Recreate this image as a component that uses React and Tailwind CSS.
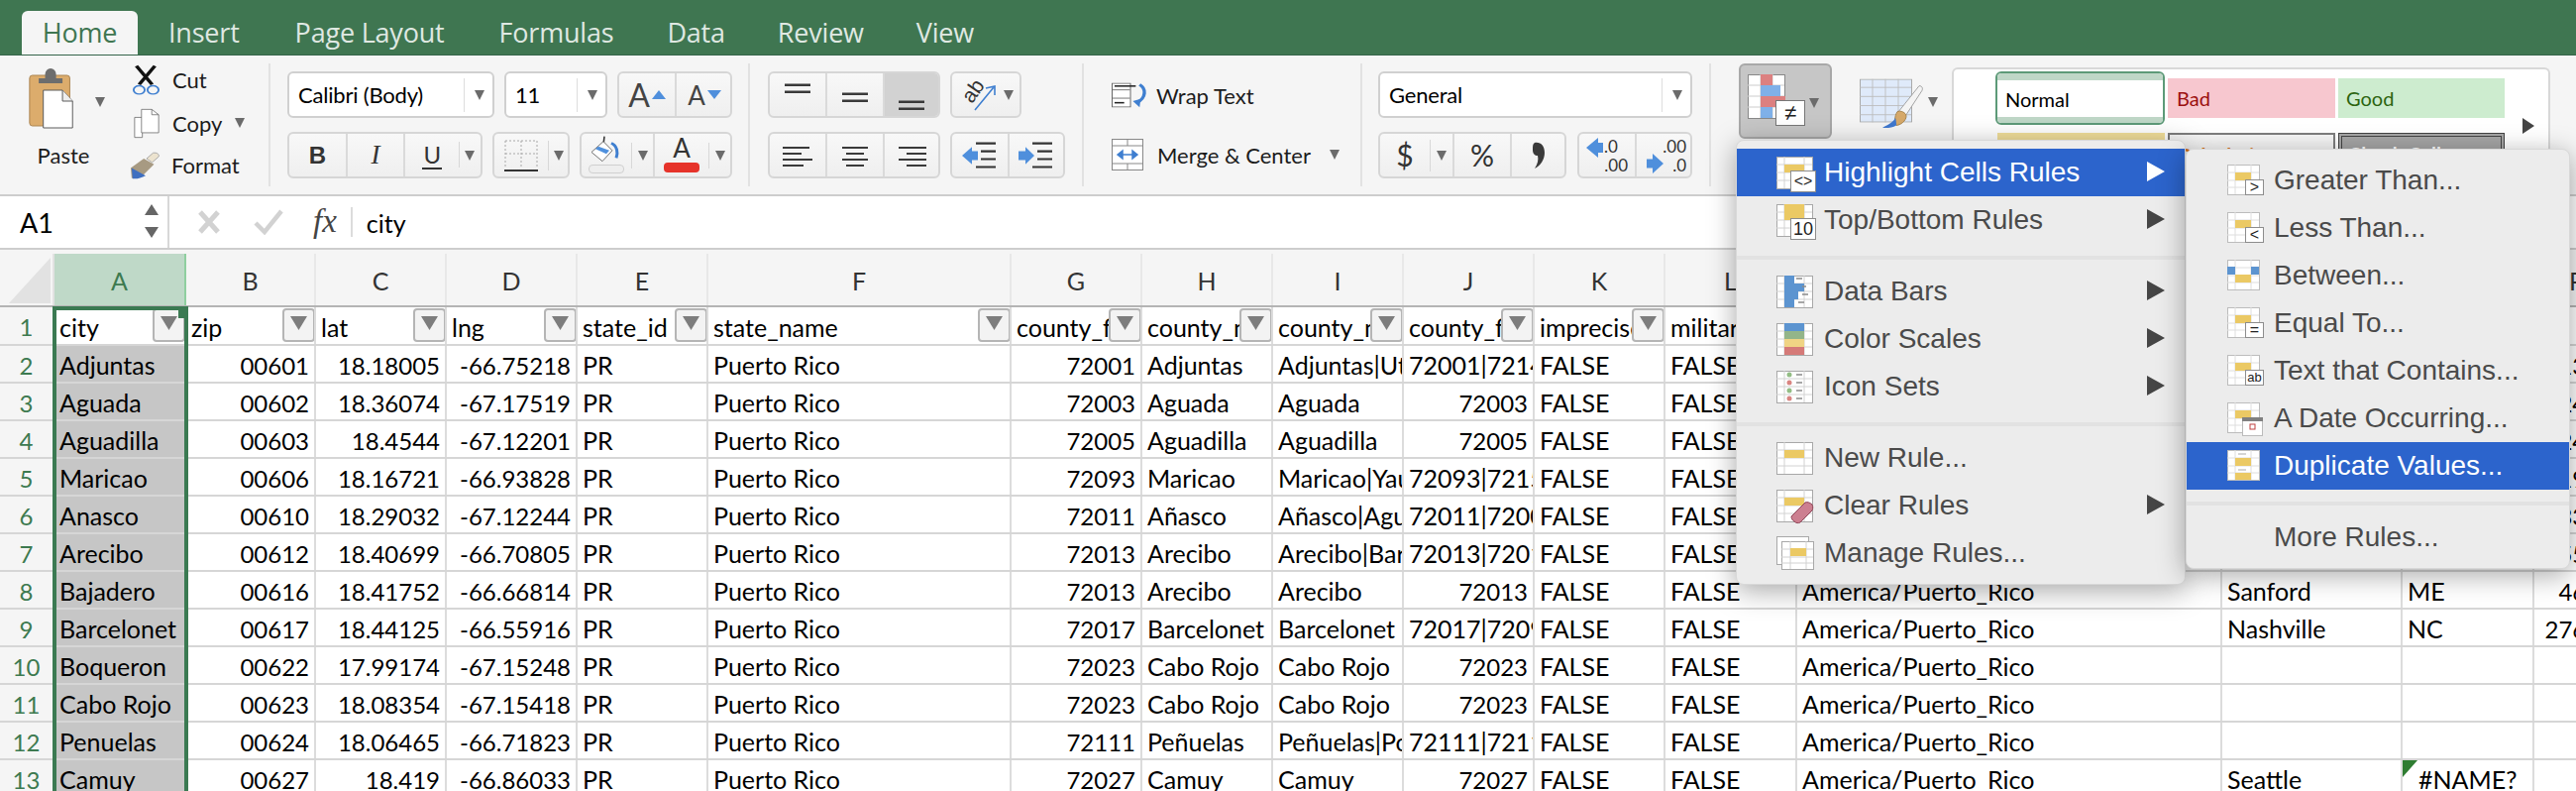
const colW = ["w-[133px]", "w-[131px]", "w-[132px]", "w-[132px]", "w-[132px]", "w-[306px]", "w-[132px]", "w-[132px]", "w-[132px]", "w-[132px]", "w-[132px]", "w-[133px]", "w-[429px]", "w-[182px]", "w-[133px]", "w-[101px]"];
const letters = "ABCDEFGHIJKLMNOP".split("");
const heads = ["city", "zip", "lat", "lng", "state_id", "state_name", "county_fips", "county_name", "county_names_all", "county_fips_all", "imprecise", "military", "timezone", "", "", ""];

const rows = [
  ["Adjuntas", "00601", "18.18005", "-66.75218", "72001", "Adjuntas", "Adjuntas|Utuado", "72001|72141", "", "", "", "13000"],
  ["Aguada", "00602", "18.36074", "-67.17519", "72003", "Aguada", "Aguada", "72003", "", "", "", "24000"],
  ["Aguadilla", "00603", "18.4544", "-67.12201", "72005", "Aguadilla", "Aguadilla", "72005", "", "", "", "24000"],
  ["Maricao", "00606", "18.16721", "-66.93828", "72093", "Maricao", "Maricao|Yauco", "72093|72153", "", "", "", "19000"],
  ["Anasco", "00610", "18.29032", "-67.12244", "72011", "Añasco", "Añasco|Aguada", "72011|72003", "", "", "", "33000"],
  ["Arecibo", "00612", "18.40699", "-66.70805", "72013", "Arecibo", "Arecibo|Barceloneta", "72013|72017", "", "", "", "55000"],
  ["Bajadero", "00616", "18.41752", "-66.66814", "72013", "Arecibo", "Arecibo", "72013", "Sanford", "ME", "", "46000"],
  ["Barcelonet", "00617", "18.44125", "-66.55916", "72017", "Barcelonet", "Barcelonet", "72017|72091", "Nashville", "NC", "", "276000"],
  ["Boqueron", "00622", "17.99174", "-67.15248", "72023", "Cabo Rojo", "Cabo Rojo", "72023", "", "", "", ""],
  ["Cabo Rojo", "00623", "18.08354", "-67.15418", "72023", "Cabo Rojo", "Cabo Rojo", "72023", "", "", "", ""],
  ["Penuelas", "00624", "18.06465", "-66.71823", "72111", "Peñuelas", "Peñuelas|Ponce", "72111|72113", "", "", "", ""],
  ["Camuy", "00627", "18.419", "-66.86033", "72027", "Camuy", "Camuy", "72027", "Seattle", "#NAME?", "", ""],
];

function Caret({ className = "" }) {
  return (
    <svg width="10" height="12" viewBox="0 0 10 12" className={className}>
      <path d="M0 1h10L5 11z" fill="#6b6b6b" />
    </svg>
  );
}

function Seg({ className = "", children }) {
  return <div className={"flex items-center justify-center h-full shrink-0 border-r-2 border-[#dadada] last:border-r-0 " + className}>{children}</div>;
}

function BtnGroup({ className = "", children }) {
  return <div className={"flex h-[47px] rounded-md border-2 border-[#d6d6d6] bg-gradient-to-b from-[#f8f8f8] to-[#efefef] overflow-hidden " + className}>{children}</div>;
}

function Lines({ ys, xs = [[3, 29]], w = 32, h = 32, bar = 2.5, color = "#3a3a3a" }) {
  return (
    <svg width={w} height={h} viewBox={`0 0 ${w} ${h}`}>
      {ys.map((y, i) => {
        const x = xs[i % xs.length];
        return <rect key={i} x={x[0]} y={y} width={x[1] - x[0]} height={bar} fill={color} />;
      })}
    </svg>
  );
}

function Combo({ className, label }) {
  return (
    <div className={"flex items-center h-[47px] rounded-md border-2 border-[#d0d0d0] bg-white pl-[9px] pr-[8px] shrink-0 " + className}>
      <span className="flex-1 text-[22px] text-black tracking-[-0.2px]">{label}</span>
      <span className="w-px h-[34px] bg-[#dedede] mr-[10px]" />
      <Caret />
    </div>
  );
}

function Clipboard() {
  return (
    <svg width="48" height="62" viewBox="0 0 52 62" preserveAspectRatio="none">
      <rect x="2" y="8" width="44" height="51" rx="3" fill="#dcac6c" stroke="#a98350" />
      <path d="M12 16v-5h7v-4a6 6 0 0 1 12 0v4h7v5z" fill="#6d6d6d" />
      <path d="M17 23h21l11 11v27H17z" fill="#fff" stroke="#555" strokeWidth="1" />
      <path d="M38 23v11h11" fill="#eee" stroke="#555" strokeWidth="1" />
    </svg>
  );
}

function Scissors() {
  return (
    <svg width="28" height="32" viewBox="0 0 30 46" preserveAspectRatio="none">
      <path d="M5 2l17 27M25 2L8 29" stroke="#111" strokeWidth="4" />
      <circle cx="8" cy="37" r="6" fill="none" stroke="#3f7fd0" strokeWidth="2" />
      <circle cx="23" cy="37" r="6" fill="none" stroke="#3f7fd0" strokeWidth="2" />
    </svg>
  );
}

function CopyIcon() {
  return (
    <svg width="26" height="31" viewBox="0 0 30 46" preserveAspectRatio="none">
      <path d="M1 14h9v30H1z" fill="#fff" stroke="#666" />
      <path d="M9 2h12l8 8v27H9z" fill="#fff" stroke="#666" />
      <path d="M21 2v8h8" fill="none" stroke="#666" />
    </svg>
  );
}

function Brush() {
  return (
    <svg width="32" height="28" viewBox="0 0 34 44" preserveAspectRatio="none">
      <path d="M25 2c4-1 7 2 6 6l-7 9-6-6z" fill="#ece3cf" stroke="#999" />
      <path d="M15 11l11 9-11 16c-4 3-10 6-13 6L1 26z" fill="#a79a82" />
      <path d="M2 26l15 12-3 2c-4 3-8 3-11 3z" fill="#3f6fc0" />
    </svg>
  );
}

function BucketIcon() {
  return (
    <svg width="34" height="30" viewBox="0 0 34 36" preserveAspectRatio="none">
      <path d="M15 2l-1 10" stroke="#333" strokeWidth="1.5" />
      <path d="M14 8L2 21l11 11 10-13z" fill="#fff" stroke="#666" />
      <path d="M9 14l11 5-3 4L6 17z" fill="#4f90dd" />
      <path d="M22 10c6 3 7 12 5 18" stroke="#3f7fd0" strokeWidth="3" fill="none" />
    </svg>
  );
}

function GridBase({ children }) {
  return (
    <svg width="40" height="40" viewBox="0 0 40 40">
      <rect x="0.5" y="4.5" width="36" height="32" fill="#fff" stroke="#a8a8a8" />
      <path d="M8 4v32M28 4v32M0 12h36M0 20h36M0 28h36" stroke="#d2d2d2" />
      {children}
    </svg>
  );
}

function Badge({ x = 14, y = 18, w = 25, h = 21, label, size = 18 }) {
  return (
    <g>
      <rect x={x + 0.5} y={y + 0.5} width={w} height={h} fill="#fff" stroke="#8d8d8d" />
      <text x={x + w / 2 + 0.5} y={y + h / 2 + size * 0.36} textAnchor="middle" fontSize={size} fontFamily="Liberation Sans" fill="#222">{label}</text>
    </g>
  );
}

const yellow = "#ebc964";

function Highlight({ label, top }) {
  return (
    <GridBase>
      <rect x="8" y={top ? 4 : 12} width="20" height={top ? 16 : 8} fill={yellow} />
      <Badge label={label} size={top ? 18 : 16} />
    </GridBase>
  );
}

function SubBase({ children }) {
  return (
    <svg width="40" height="40" viewBox="0 0 40 40">
      <rect x="0.5" y="4.5" width="32" height="30" fill="#fff" stroke="#bcbcbc" />
      <path d="M8 4v30M24 4v30M0 12h32M0 20h32M0 27h32" stroke="#dedede" />
      {children}
    </svg>
  );
}

function subBadge(label, size = 16) {
  return <Badge x={18} y={19} w={18} h={15} label={label} size={size} />;
}

const subYellow = <rect x="8" y="12" width="16" height="8" fill={yellow} />;

const mainItems = [
  { label: "Highlight Cells Rules", icon: <Highlight label="<>" />, arrow: true, active: true },
  { label: "Top/Bottom Rules", icon: <Highlight label="10" top />, arrow: true },
  "sep",
  {
    label: "Data Bars",
    arrow: true,
    icon: (
      <GridBase>
        <path d="M8 4h10v8H8zM8 12h20v8H8zM8 20h14v8H8zM8 28h10v8H8z" fill="#5c94d0" />
        <path d="M20 7h6M26 15h4M26 23h6M22 31h6" stroke="#8a8a8a" strokeWidth="1.5" />
      </GridBase>
    ),
  },
  {
    label: "Color Scales",
    arrow: true,
    icon: (
      <GridBase>
        <rect x="8" y="4" width="20" height="8" fill="#5c94d0" />
        <rect x="8" y="12" width="20" height="8" fill="#93b589" />
        <rect x="8" y="20" width="20" height="8" fill="#f0d484" />
        <rect x="8" y="28" width="20" height="8" fill="#d57a78" />
      </GridBase>
    ),
  },
  {
    label: "Icon Sets",
    arrow: true,
    icon: (
      <GridBase>
        <circle cx="13" cy="8" r="2.5" fill="#93bd85" />
        <circle cx="13" cy="16" r="2.5" fill="#d98582" />
        <circle cx="13" cy="24" r="2.5" fill="#93bd85" />
        <circle cx="13" cy="32" r="2.5" fill="#d98582" />
        <path d="M20 8h6M20 16h6M20 24h6M20 32h6" stroke="#8a8a8a" strokeWidth="1.5" />
      </GridBase>
    ),
  },
  "sep",
  { label: "New Rule...", icon: <GridBase><rect x="8" y="12" width="20" height="8" fill={yellow} /></GridBase> },
  {
    label: "Clear Rules",
    arrow: true,
    icon: (
      <GridBase>
        <rect x="8" y="12" width="20" height="8" fill={yellow} />
        <path d="M15 31l14-14c2-1 5 0 7 2 1 2 1 4 0 6L24 37c-2 1-4 1-6-1-2-1-3-3-3-5z" fill="#cc7f90" stroke="#8f4658" />
      </GridBase>
    ),
  },
  {
    label: "Manage Rules...",
    icon: (
      <svg width="40" height="40" viewBox="0 0 40 40">
        <rect x="0.5" y="3.5" width="32" height="28" fill="#fff" stroke="#a8a8a8" />
        <rect x="5.5" y="8.5" width="32" height="28" fill="#fff" stroke="#a8a8a8" />
        <path d="M14 8v28M30 8v28M5 16h32M5 24h32M5 30h32" stroke="#d2d2d2" />
        <rect x="14" y="15" width="16" height="8" fill={yellow} />
      </svg>
    ),
  },
];

const subItems = [
  { label: "Greater Than...", icon: <SubBase>{subYellow}{subBadge(">")}</SubBase> },
  { label: "Less Than...", icon: <SubBase>{subYellow}{subBadge("<")}</SubBase> },
  {
    label: "Between...",
    icon: (
      <SubBase>
        <rect x="0" y="11" width="8" height="8" fill="#5c94d0" />
        <rect x="24" y="11" width="8" height="8" fill="#5c94d0" />
        <rect x="8" y="19" width="16" height="8" fill={yellow} />
      </SubBase>
    ),
  },
  { label: "Equal To...", icon: <SubBase>{subYellow}{subBadge("=")}</SubBase> },
  { label: "Text that Contains...", icon: <SubBase>{subYellow}{subBadge("ab", 13)}</SubBase> },
  {
    label: "A Date Occurring...",
    icon: (
      <SubBase>
        {subYellow}
        <rect x="15.5" y="19.5" width="20" height="18" fill="#fff" stroke="#bbb" />
        <rect x="15" y="19" width="21" height="4" fill="#808080" />
        <rect x="23" y="26" width="5" height="5" fill="#fff" stroke="#c04040" />
      </SubBase>
    ),
  },
  {
    label: "Duplicate Values...",
    active: true,
    icon: (
      <SubBase>
        <rect x="8" y="12" width="16" height="8" fill={yellow} />
        <rect x="8" y="27" width="16" height="7" fill={yellow} />
        <path d="M11 8h8M11 24h8" stroke="#aaa" />
      </SubBase>
    ),
  },
  "sep",
  { label: "More Rules..." },
];

function MenuRow({ item, leftClass, iconClass }) {
  const on = item.active;
  return (
    <div className={"flex items-center h-[48px] relative " + leftClass + (on ? " bg-[#2c64cc] text-white" : " text-[#4a4a4a]")}>
      <span className={"flex items-center shrink-0 " + iconClass}>{item.icon}</span>
      <span>{item.label}</span>
      {item.arrow && (
        <svg width="18" height="20" viewBox="0 0 18 20" className="absolute right-[20px] top-[13px]">
          <path d="M0 0l18 10L0 20z" fill={on ? "#fff" : "#454545"} />
        </svg>
      )}
    </div>
  );
}

function Menu({ className, items, leftClass, iconClass }) {
  return (
    <div className={"absolute z-20 bg-[#ececec] rounded-lg font-['Liberation_Sans'] text-[28px] shadow-[0_6px_28px_rgba(0,0,0,0.35)] border border-[#d8d8d8] " + className}>
      {items.map((it, i) =>
        it === "sep" ? (
          <div key={i} className="h-[4px] bg-[#e2e2e2] mt-[12px] mb-[8px]" />
        ) : (
          <MenuRow key={i} item={it} leftClass={leftClass} iconClass={iconClass} />
        )
      )}
    </div>
  );
}

function FilterBtn() {
  return (
    <div className="absolute right-[-1px] top-[1px] w-[33px] h-[34px] z-10 rounded-sm border-2 border-[#b5b5b5] bg-[#f3f3f3] flex justify-center pt-[5px]">
      <svg width="17" height="16" viewBox="0 0 17 16"><path d="M0 1h17l-8.500 14z" fill="#7d7d7d" /></svg>
    </div>
  );
}

function Cell({ i, text, right, filter, bg }) {
  return (
    <div className={"relative h-full shrink-0 flex items-center px-[5px] pt-[3px] overflow-hidden whitespace-nowrap border-r-2 border-[#dcdcdc] " + colW[i] + (right ? " justify-end" : " text-[25px]") + (bg ? " bg-[#c6c6c6]" : "")}>
      <span className={right ? "" : "block"}>{text}</span>
      {filter && <FilterBtn />}
    </div>
  );
}

function DataRow({ num, r }) {
  const [city, zip, lat, lng, fips, county, all, fipsAll, n, o, , p] = r;
  const vals = [city, zip, lat, lng, "PR", "Puerto Rico", fips, county, all, fipsAll, "FALSE", "FALSE", "America/Puerto_Rico", n, o, p];
  const rightCols = [1, 2, 3, 6, 15];
  return (
    <div className="flex h-[38px] border-b-2 border-[#d6d6d6]">
      <div className="w-[55px] shrink-0 bg-[#f5f5f5] text-[#3d7a50] flex items-center justify-center pt-[3px] border-r-2 border-[#dcdcdc]">{num}</div>
      {vals.map((v, i) => {
        if (i === 14 && v === "#NAME?") {
          return (
            <div key={i} className={"relative h-full shrink-0 flex items-center pl-[16px] pt-[3px] overflow-hidden border-r-2 border-[#dcdcdc] text-[25px] " + colW[i]}>
              <span>{v}</span>
              <svg width="15" height="17" viewBox="0 0 15 17" className="absolute left-0 top-0"><path d="M0 0h15L0 17z" fill="#2f7d32" /></svg>
            </div>
          );
        }
        return <Cell key={i} i={i} text={v} right={rightCols.includes(i) || (i === 9 && !v.includes("|"))} bg={i === 0} />;
      })}
    </div>
  );
}

export default function App() {
  return (
    <div className="relative w-[2600px] h-[798px] overflow-hidden bg-white font-['Lato',sans-serif] text-black">
      {/* title tabs */}
      <div className="h-[56px] bg-[#3f7651] border-b border-[#35654a] flex items-end pl-[22px] font-['Open_Sans',sans-serif] text-[27px] tracking-[-0.2px] text-[#dfe8e2]">
        <div className="w-[117px] h-[44px] bg-[#f5f5f5] rounded-t-md text-[#3f7651] flex items-center justify-center">Home</div>
        <div className="ml-[31px] h-[44px] flex items-center">Insert</div>
        <div className="ml-[56px] h-[44px] flex items-center">Page Layout</div>
        <div className="ml-[55px] h-[44px] flex items-center">Formulas</div>
        <div className="ml-[54px] h-[44px] flex items-center">Data</div>
        <div className="ml-[53px] h-[44px] flex items-center">Review</div>
        <div className="ml-[53px] h-[44px] flex items-center">View</div>
      </div>

      {/* ribbon */}
      <div className="h-[140px] bg-[#f5f5f5] flex pt-[8px] text-[22px] text-[#1c1c1c]">
        {/* clipboard */}
        <div className="w-[273px] h-[124px] shrink-0 border-r-2 border-[#e2e2e2] flex">
          <div className="w-[133px] pl-[28px] pt-[4px] relative">
            <Clipboard />
            <Caret className="absolute left-[96px] top-[33px]" />
            <div className="w-[72px] text-center mt-[10px]">Paste</div>
          </div>
          <div className="flex flex-col">
            <div className="flex items-center h-[34px] gap-[13px]"><Scissors /><span>Cut</span></div>
            <div className="flex items-center h-[46px] gap-[13px] mt-[6px] ml-[2px]"><CopyIcon /><span>Copy</span><Caret /></div>
            <div className="flex items-center h-[46px] gap-[10px] -ml-[2px]"><Brush /><span>Format</span></div>
          </div>
        </div>

        {/* font */}
        <div className="w-[484px] h-[124px] shrink-0 border-r-2 border-[#e2e2e2] pl-[17px] pt-[8px] flex flex-col gap-[14px]">
          <div className="flex gap-[10px]">
            <Combo className="w-[209px]" label="Calibri (Body)" />
            <Combo className="w-[104px]" label="11" />
            <BtnGroup className="w-[116px]">
              <Seg className="w-[58px] gap-[2px]">
                <span className="text-[32px] leading-none text-[#444]">A</span>
                <svg width="14" height="9" viewBox="0 0 14 9"><path d="M7 0l7 9H0z" fill="#4f8fdc" /></svg>
              </Seg>
              <Seg className="w-[56px] gap-[2px]">
                <span className="text-[26px] leading-none text-[#444]">A</span>
                <svg width="14" height="9" viewBox="0 0 14 9"><path d="M0 0h14L7 9z" fill="#4f8fdc" /></svg>
              </Seg>
            </BtnGroup>
          </div>
          <div className="flex gap-[10px]">
            <BtnGroup className="w-[197px]">
              <Seg className="w-[59px] font-['Liberation_Sans'] font-bold text-[24px] text-[#333]">B</Seg>
              <Seg className="w-[58px] font-['Liberation_Serif'] italic text-[27px] text-[#333]">I</Seg>
              <div className="w-[56px] flex items-center justify-center relative">
                <span className="text-[24px] text-[#333] border-b-2 border-[#333] leading-[26px] px-[1px]">U</span>
                <span className="absolute right-0 top-[8px] w-px h-[26px] bg-[#d8d8d8]" />
              </div>
              <div className="w-[22px] flex items-center justify-center"><Caret /></div>
            </BtnGroup>
            <BtnGroup className="w-[78px]">
              <div className="w-[54px] flex items-center justify-center">
                <svg width="34" height="34" viewBox="0 0 34 34">
                  <path d="M1 2h32M1 15h32M17 2v28M1 2v28M33 2v28" stroke="#a8a8a8" strokeDasharray="2 2" fill="none" />
                  <rect x="0" y="31" width="34" height="2" fill="#333" />
                </svg>
              </div>
              <span className="w-px h-[30px] my-auto bg-[#d8d8d8]" />
              <div className="flex-1 flex items-center justify-center"><Caret /></div>
            </BtnGroup>
            <BtnGroup className="w-[154px]">
              <div className="w-[50px] flex flex-col items-center pt-[1px]">
                <BucketIcon />
                <span className="w-[36px] h-[9px] rounded-sm bg-[#eeeeee] border border-[#d0d0d0]" />
              </div>
              <span className="w-px h-[26px] my-auto bg-[#d8d8d8]" />
              <div className="w-[23px] flex items-center justify-center border-r-2 border-[#dadada]"><Caret /></div>
              <div className="w-[54px] flex flex-col items-center">
                <span className="text-[26px] leading-[28px] text-[#333]">A</span>
                <span className="w-[36px] h-[10px] rounded-sm bg-[#e6332a] mt-[1px]" />
              </div>
              <span className="w-px h-[26px] my-auto bg-[#d8d8d8]" />
              <div className="flex-1 flex items-center justify-center"><Caret /></div>
            </BtnGroup>
          </div>
        </div>

        {/* alignment */}
        <div className="w-[337px] h-[124px] shrink-0 border-r-2 border-[#e2e2e2] pl-[18px] pt-[8px] flex flex-col gap-[14px]">
          <div className="flex gap-[10px]">
            <BtnGroup className="w-[174px]">
              <Seg className="w-[58px]"><Lines ys={[4.5, 11.5]} /></Seg>
              <Seg className="w-[58px]"><Lines ys={[13.5, 20.5]} /></Seg>
              <Seg className="flex-1 bg-[#d2d2d2]"><Lines ys={[21.5, 28.5]} /></Seg>
            </BtnGroup>
            <BtnGroup className="w-[72px]">
              <div className="w-[52px] relative shrink-0">
                <span className="absolute left-[9px] top-[7px] -rotate-[55deg] text-[21px] text-[#333] leading-none font-['Liberation_Sans']">ab</span>
                <svg width="50" height="43" viewBox="0 0 50 43" className="absolute left-0 top-0"><path d="M23 37L42 14M34 15l9-2 0 9" stroke="#3f7fd0" strokeWidth="1.6" fill="none" /></svg>
              </div>
              <div className="flex-1 flex items-center"><Caret /></div>
            </BtnGroup>
          </div>
          <div className="flex gap-[10px]">
            <BtnGroup className="w-[174px] h-[46px]">
              <Seg className="w-[58px]"><Lines ys={[7, 13, 19, 25]} bar={2} xs={[[1, 28], [1, 20], [1, 31], [1, 22]]} /></Seg>
              <Seg className="w-[58px]"><Lines ys={[7, 13, 19, 25]} bar={2} xs={[[3, 29], [7, 25]]} /></Seg>
              <Seg className="flex-1"><Lines ys={[7, 13, 19, 25]} bar={2} xs={[[3, 31], [11, 31]]} /></Seg>
            </BtnGroup>
            <BtnGroup className="w-[116px] h-[46px]">
              <Seg className="w-[58px]">
                <svg width="36" height="30" viewBox="0 0 36 34" preserveAspectRatio="none">
                  <path d="M0 17l10-10v5h6v10h-6v5z" fill="#4f8fdc" />
                  <path d="M14 3h20M19 12h15M19 21h15M14 30h20" stroke="#333" strokeWidth="2.4" />
                </svg>
              </Seg>
              <Seg className="flex-1">
                <svg width="36" height="30" viewBox="0 0 36 34" preserveAspectRatio="none">
                  <path d="M0 12h7V7l9 10-9 10v-5H0z" fill="#4f8fdc" />
                  <path d="M14 3h20M19 12h15M19 21h15M14 30h20" stroke="#333" strokeWidth="2.4" />
                </svg>
              </Seg>
            </BtnGroup>
          </div>
        </div>

        {/* wrap / merge */}
        <div className="w-[281px] h-[124px] shrink-0 border-r-2 border-[#e2e2e2] pl-[28px] pt-[10px] flex flex-col gap-[16px]">
          <div className="flex items-center h-[44px] gap-[7px]">
            <svg width="38" height="26" viewBox="0 0 39 34" preserveAspectRatio="none">
              <rect x="0.5" y="1.500" width="19" height="31" fill="#fff" stroke="#666" />
              <path d="M0 10h19M0 21h19" stroke="#666" />
              <path d="M3 27h10" stroke="#222" strokeWidth="2" />
              <path d="M3 5h22" stroke="#222" strokeWidth="2" />
              <path d="M29 3c7 5 7 18-3 24" stroke="#3f7fd0" strokeWidth="3.500" fill="none" />
              <path d="M22 25l8-3-1 11z" fill="#3f7fd0" />
            </svg>
            <span>Wrap Text</span>
          </div>
          <div className="flex items-center h-[44px] gap-[13px]">
            <svg width="33" height="34" viewBox="0 0 33 34">
              <rect x="0.5" y="1.500" width="31" height="31" fill="#fff" stroke="#888" />
              <path d="M0 8h32M0 26h32M16 1v7M16 26v7" stroke="#888" />
              <path d="M6 17h20M6 17l5-4v8zM26 17l-5-4v8z" stroke="#3f7fd0" strokeWidth="1.500" fill="#3f7fd0" />
            </svg>
            <span>Merge &amp; Center</span>
            <Caret className="ml-[6px]" />
          </div>
        </div>

        {/* number */}
        <div className="w-[352px] h-[124px] shrink-0 border-r-2 border-[#e2e2e2] pl-[16px] pt-[8px] flex flex-col gap-[14px]">
          <Combo className="w-[317px]" label="General" />
          <div className="flex gap-[11px]">
            <BtnGroup className="w-[190px] h-[46px]">
              <div className="w-[50px] flex items-center justify-center text-[30px] text-[#333]">$</div>
              <span className="w-px h-[32px] my-auto bg-[#d8d8d8]" />
              <div className="w-[24px] flex items-center justify-center border-r-2 border-[#dadada]"><Caret /></div>
              <Seg className="w-[58px] text-[30px] text-[#333]">%</Seg>
              <Seg className="flex-1">
                <svg width="14" height="28" viewBox="0 0 14 28"><path d="M3 1c6-1 10 3 10 10 0 7-4 13-10 16 3-5 4-9 3-13-3 0-5-2-5-6 0-4 0-6 2-7z" fill="#3a3a3a" /></svg>
              </Seg>
            </BtnGroup>
            <BtnGroup className="w-[116px] h-[46px] text-[17px] leading-[17px] text-[#333]">
              <Seg className="w-[58px]">
                <div className="relative w-[46px] h-[36px]">
                  <svg width="17" height="20" viewBox="0 0 17 24" preserveAspectRatio="none" className="absolute left-[2px] top-0"><path d="M0 12L12 0v6h5v12h-5v6z" fill="#4f8fdc" /></svg>
                  <span className="absolute left-[20px] top-0">.0</span>
                  <span className="absolute right-[2px] bottom-0">.00</span>
                </div>
              </Seg>
              <Seg className="flex-1">
                <div className="relative w-[46px] h-[36px]">
                  <span className="absolute right-0 top-0">.00</span>
                  <svg width="17" height="20" viewBox="0 0 17 22" preserveAspectRatio="none" className="absolute left-[6px] bottom-0"><path d="M0 6h6V0l11 11L6 22v-6H0z" fill="#4f8fdc" /></svg>
                  <span className="absolute right-0 bottom-0">.0</span>
                </div>
              </Seg>
            </BtnGroup>
          </div>
        </div>

        {/* styles */}
        <div className="flex-1 h-[124px] flex pl-[28px]">
          <div className="w-[94px] h-[76px] rounded-md border-2 border-[#a8a8a8] bg-[#c6c6c6] flex items-center pl-[7px] shrink-0 relative">
            <svg width="60" height="56" viewBox="0 0 60 56">
              <rect x="0.5" y="1.500" width="37" height="44" fill="#fff" stroke="#888" />
              <path d="M13 1v44M25 1v44M0 12h37M0 23h37M0 34h37" stroke="#ccc" />
              <rect x="13" y="1" width="12" height="11" fill="#dc8080" />
              <rect x="13" y="12" width="20" height="11" fill="#7fb0e8" />
              <rect x="13" y="23" width="25" height="11" fill="#dc8080" />
              <rect x="13" y="34" width="12" height="11" fill="#7fb0e8" />
              <rect x="28.500" y="27.500" width="29" height="25" fill="#fff" stroke="#777" />
              <text x="43" y="47" textAnchor="middle" fontSize="22" fontFamily="Liberation Sans" fill="#222">≠</text>
            </svg>
            <Caret className="absolute right-[11px] top-[32px]" />
          </div>
          <div className="w-[121px] h-[76px] pl-[28px] shrink-0 relative">
            <svg width="64" height="52" viewBox="0 0 64 68" preserveAspectRatio="none" className="mt-[15px]">
              <rect x="0.5" y="1.500" width="52" height="56" fill="#dfeafa" stroke="#aaa" />
              <path d="M0 12h52M0 24h52M0 36h52M0 48h52M13 1v57M26 1v57M39 1v57" stroke="#bcbcbc" />
              <path d="M60 10c3 0 4 3 3 6L46 50l-8-4z" fill="#f4f4f4" stroke="#999" />
              <path d="M38 44c3-2 9 1 9 6 0 6-6 12-10 12-2-4-2-12 1-18z" fill="#d6a96a" stroke="#a07d46" />
              <path d="M36 52c1 5 1 8 1 10-4 3-10 4-14 3 5-3 11-7 13-13z" fill="#3f78cf" />
            </svg>
            <Caret className="absolute left-[97px] top-[33px]" />
          </div>
          <div className="w-[604px] h-[128px] mt-[4px] rounded-t-md border-2 border-[#d8d8d8] border-b-0 bg-white relative pl-[42px] text-[20px] overflow-hidden shrink-0">
            <div className="flex gap-[3px] pt-[2px] items-center">
              <div className="w-[171px] h-[54px] rounded-md border-2 border-[#5d9a78] bg-white flex flex-col justify-between overflow-hidden">
                <span className="h-[7px] bg-[#bfd7c7]" />
                <span className="pl-[8px] text-black">Normal</span>
                <span className="h-[6px] bg-[#bfd7c7]" />
              </div>
              <div className="w-[169px] h-[40px] bg-[#f7c7cf] text-[#9c1010] pl-[9px] flex items-center">Bad</div>
              <div className="w-[168px] h-[40px] bg-[#cdeccf] text-[#2c6410] pl-[8px] flex items-center">Good</div>
            </div>
            <div className="flex gap-[3px] mt-[8px] pl-[2px]">
              <div className="w-[169px] h-[40px] bg-[#f2df9b]" />
              <div className="w-[169px] h-[40px] border-2 border-[#7d7d7d] bg-[#f5f5f5] text-[#d9731a] font-bold pl-[8px] pt-[6px]">Calculation</div>
              <div className="w-[168px] h-[40px] border-4 border-double border-[#444] bg-[#a5a5a5] text-white font-bold pl-[6px] pt-[3px]">Check Cell</div>
            </div>
            <svg width="12" height="16" viewBox="0 0 12 16" className="absolute right-[14px] top-[49px]"><path d="M0 0l12 8L0 16z" fill="#444" /></svg>
          </div>
        </div>
      </div>

      {/* formula bar */}
      <div className="h-[60px] bg-[#f5f5f5]">
        <div className="h-[56px] border-t-2 border-b-2 border-[#cdcdcd] bg-white flex items-center text-[25px]">
          <div className="w-[171px] h-full border-r-2 border-[#d8d8d8] flex items-center pl-[20px] pt-[3px] text-[27px] relative shrink-0">
            A1
            <svg width="16" height="40" viewBox="0 0 16 40" className="absolute left-[145px] top-[5px]">
              <path d="M8 3l7 11H1zM1 26h14L8 37z" fill="#666" />
            </svg>
          </div>
          <svg width="24" height="24" viewBox="0 0 24 24" className="ml-[28px]"><path d="M3 2l18 20M21 2L3 22" stroke="#d2d2d2" strokeWidth="5" /></svg>
          <svg width="30" height="26" viewBox="0 0 30 26" className="ml-[33px]"><path d="M2 14l9 9L28 2" stroke="#d2d2d2" strokeWidth="4.500" fill="none" /></svg>
          <span className="ml-[30px] font-['Liberation_Serif'] italic text-[33px] text-[#444]">fx</span>
          <span className="ml-[14px] w-[2px] h-[30px] bg-[#dcdcdc]" />
          <span className="ml-[14px] pt-[3px]">city</span>
        </div>
      </div>

      {/* sheet */}
      <div className="text-[24px] leading-none text-black">
        <div className="flex h-[54px] bg-[#f5f5f5] border-b-2 border-[#b4b4b4] text-[#333]">
          <div className="w-[55px] shrink-0 relative border-r-2 border-[#e2e2e2]">
            <svg width="46" height="48" viewBox="0 0 46 48" className="absolute left-[7px] top-[3px]"><path d="M44 1v46H2z" fill="#e2e2e2" /></svg>
          </div>
          {letters.map((l, i) => (
            <div key={l} className={"shrink-0 flex items-center justify-center pt-[3px] border-r-2 text-[25px] " + colW[i] + (i === 0 ? " bg-[#bfd9c8] text-[#3d7a50] border-[#8fcf9f]" : " border-[#e8e8e8]") + (i === 15 ? " pr-[14px]" : "")}>{l}</div>
          ))}
        </div>

        <div className="flex h-[39px] border-b-2 border-[#d6d6d6]">
          <div className="w-[55px] shrink-0 bg-[#f5f5f5] text-[#3d7a50] flex items-center justify-center pt-[3px] border-r-2 border-[#dcdcdc]">1</div>
          {heads.map((h, i) => (
            <Cell key={i} i={i} text={h} filter={i < 13} />
          ))}
        </div>

        {rows.map((r, i) => (
          <DataRow key={i} num={i + 2} r={r} />
        ))}
      </div>

      {/* column A selection frame */}
      <div className="absolute z-10 left-[53px] top-[309px] w-[137px] h-[500px] border-[4px] border-[#3b7a52] pointer-events-none">
        <span className="absolute right-[-4px] top-[-4px] w-[10px] h-[12px] bg-[#3b7a52]" />
      </div>

      <Menu className="left-[1752px] top-[141px] w-[454px] h-[449px] pt-[8px]" items={mainItems} leftClass="pl-[40px]" iconClass="w-[48px]" />
      <Menu className="left-[2206px] top-[150px] w-[388px] h-[424px] pt-[7px]" items={subItems} leftClass={"pl-[41px]"} iconClass="w-[47px] min-h-[40px]" />
    </div>
  );
}
